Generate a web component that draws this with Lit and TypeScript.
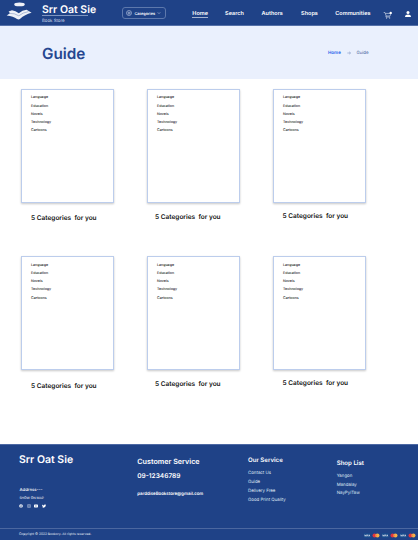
import { LitElement, html, css, svg } from "lit";
import { customElement } from "lit/decorators.js";

const NAV = ["Home", "Search", "Authors", "Shops", "Communities"];
const TOPICS = ["Language", "Education", "Novels", "Technology", "Cartoons"];
const SERVICES = ["Contact Us", "Guide", "Delivery Free", "Good Print Quality"];
const CITIES = ["Yangon", "Mandalay", "NayPyiTaw"];

const logo = html`<svg class="logo" viewBox="0 0 28 21" width="28" height="21">
  <ellipse cx="13.5" cy="4.4" rx="5.3" ry="1.9" fill="#eef1f7" />
  <path d="M2.6 11.6 6 10.2Q9.6 10.6 12.8 13.2 16.4 10.2 20.6 9.8L25.6 12.8Q18.6 14.6 14.2 18.8 12.8 20 11 19 7.4 16.2.7 15.6L4 13.2z" fill="#eef1f7" />
  <path d="M3.6 13.4Q8.6 13 12.8 15.8 17 12.4 22.4 11.6" fill="none" stroke="#8397c0" stroke-width=".6" />
</svg>`;

const cart = html`<svg class="cart" viewBox="0 0 10 8" width="10" height="8">
  <path d="M.7 1.5H2L3.2 5H7L8 2.4H2.4M3.2 5 2.8 6H7.2" fill="none" stroke="#dfe6f3" stroke-width=".6" />
  <circle cx="3.6" cy="7" r=".5" fill="#fff" /><circle cx="6.7" cy="7" r=".5" fill="#fff" />
  <circle cx="7.7" cy="1.9" r="1.2" fill="#fff" />
</svg>`;

const person = html`<svg class="person" viewBox="0 0 6 6" width="6" height="6">
  <circle cx="3" cy="1.5" r="1.5" fill="#fff" />
  <path d="M.1 5.9V5Q.3 3.6 3 3.5 5.7 3.6 5.9 5V5.9z" fill="#fff" />
</svg>`;

const socials = [
  svg`<circle cx="2" cy="2" r="1.8" fill="#fff"/><path d="M2 3.9V1.5Q2 1 2.7 1M1.3 2.2H2.6" fill="none" stroke="#1f4287" stroke-width=".5"/>`,
  svg`<rect x=".4" y=".4" width="3.2" height="3.2" rx=".9" fill="none" stroke="#d5deee" stroke-width=".5"/><circle cx="2" cy="2" r=".8" fill="none" stroke="#d5deee" stroke-width=".4"/>`,
  svg`<rect x="0" y=".5" width="4" height="3" rx=".7" fill="#fff"/><path d="M1.6 1.3 2.8 2 1.6 2.7z" fill="#1f4287"/>`,
  svg`<path d="M.2.6Q1 1.5 2 1.5 1.9.4 2.9.4 3.3.4 3.6.7L4.2.5 3.8 1.3Q3.7 3.6 1.4 3.7.6 3.7 0 3.3.7 3.3 1.1 3 .5 2.8.4 2.3 0 1.8.2.6z" fill="#fff"/>`,
];

const visa = html`<svg viewBox="0 0 8 5" width="8" height="5">
  <rect x=".8" width="6.8" height="5" rx=".6" fill="#184a8c" />
  <path d="M1.6 1.7 2.2 3.3 3 1.7M3.5 3.4 3.8 1.7M5.2 1.8Q4.2 1.7 4.4 2.3 5.1 2.8 4.2 3.2M5.5 3.4 6.3 1.8 6.7 3.4" fill="none" stroke="#fff" stroke-width=".6" />
</svg>`;

const master = html`<svg viewBox="0 0 8 5" width="8" height="5">
  <circle cx="2.6" cy="2.5" r="2.1" fill="#e0343f" />
  <circle cx="5.4" cy="2.5" r="2.1" fill="#f4b04a" />
  <path d="M4 .95A2.1 2.1 0 0 1 4 4.05 2.1 2.1 0 0 1 4 .95z" fill="#ee7447" />
</svg>`;

@customElement("app-root")
export class AppRoot extends LitElement {
  static styles = css`
    :host {
      display: flex;
      flex-direction: column;
      width: 418px;
      height: 540px;
      overflow: hidden;
      background: #fff;
      color: #111;
      font-family: Inter, "Liberation Sans", sans-serif;
      text-rendering: geometricPrecision;
    }
    * { box-sizing: border-box; }
    svg { display: block; flex: none; }
    .top {
      height: 26px;
      flex: none;
      display: flex;
      background: #1f4287;
      border-bottom: 1px solid #5470a8;
      color: #fff;
    }
    .logo { margin-left: 6px; }
    .brand { width: 88px; padding: 4px 0 0 8px; }
    .name { font-size: 10.5px; line-height: 12px; font-weight: 600; white-space: nowrap; }
    .rule { width: 46px; height: 1px; margin-top: -1px; background: #7f95c0; }
    .sub { font-size: 4.35px; line-height: 5px; padding-top: 3.3px; color: #d3dcec; }
    .picker {
      width: 44px;
      height: 12px;
      margin-top: 7px;
      border: 1px solid #5d78ac;
      border-radius: 3px;
      display: flex;
      align-items: center;
      padding-left: 2.5px;
      font-size: 3.9px;
      font-weight: 600;
    }
    .picker span { width: 25px; padding-left: 3px; }
    .nav {
      margin-left: 26.3px;
      display: grid;
      grid-template-columns: 32.8px 36.5px 39.5px 34.2px 48px;
      font-size: 5.5px;
      line-height: 7px;
      font-weight: 600;
      padding-top: 10px;
    }
    .nav a { justify-self: start; height: 8px; padding-top: 1px; }
    .nav .on { border-bottom: 1px solid #a5b4d1; }
    .cart { margin-top: 10.5px; }
    .person { margin: 11px 0 0 12px; }
    .hero {
      height: 53px;
      flex: none;
      display: flex;
      align-items: center;
      padding: 1px 0 0 42px;
      background: #eaf0fd;
    }
    .hero h1 { margin: 0; width: 286px; font-size: 15.3px; line-height: 18px; padding-top: 1px; font-weight: 600; color: #254690; }
    .crumbs { display: grid; grid-template-columns: 18.8px 9.7px 14px; align-items: center; font-size: 4.35px; line-height: 7px; padding-top: .6px; color: #4864a0; }
    .crumbs b { font-size: 4.5px; font-weight: 600; color: #2563eb; }
    .shelf { display: grid; grid-template-columns: repeat(3, 126px); grid-auto-rows: 167.3px; padding: 10px 0 0 21px; flex: 1; align-content: start; }
    .card {
      width: 93px;
      height: 114px;
      border: 1px solid #bccdec;
      box-shadow: 0 1px 2px rgba(0, 0, 0, 0.22);
      padding: 3.3px 0 0 9px;
      font-size: 3.6px;
      line-height: 8.25px;
      font-weight: 500;
      color: #222;
    }
    .title { font-size: 6.5px; line-height: 8px; font-weight: 600; white-space: pre; }
    .t0 { padding: 11.4px 0 0 10px; }
    .t1 { padding: 9.5px 0 0 8px; }
    .t2 { padding: 8.8px 0 0 9.5px; }
    .foot { flex: none; height: 96.5px; background: #1f4287; color: #fff; display: flex; flex-direction: column; border-top: 1px solid #4d69a4; }
    .cols { height: 84px; display: grid; grid-template-columns: 118.3px 110.7px 88.7px 60px; padding-left: 19px; border-bottom: 1px solid #4b67a0; flex: none; }
    .cols h2, .cols h3 { margin: 0; font-weight: 600; white-space: nowrap; }
    .cols h2 { font-size: 10.5px; line-height: 12px; padding-top: 9.4px; }
    .addr { font-size: 4.3px; line-height: 6px; font-weight: 500; padding: 21.8px 0 0 .5px; }
    .map { font-size: 3.27px; line-height: 4px; padding: 2.6px 0 0 .5px; }
    .social { display: flex; gap: 3.7px; padding-top: 3.4px; }
    .help h3 { font-size: 7.2px; line-height: 8px; padding-top: 13px; }
    .phone { font-size: 6.55px; line-height: 8px; font-weight: 600; padding-top: 6px; }
    .mail { font-size: 4.35px; line-height: 6px; font-weight: 600; padding-top: 12px; }
    .list { font-size: 4.4px; line-height: 8.75px; color: #dde5f2; }
    .list h3 { font-size: 6.1px; line-height: 8px; color: #fff; padding: 12.8px 0 5.2px; }
    .shops h3 { padding: 15.2px 0 5.2px; }
    .base { flex: 1; display: flex; align-items: center; justify-content: space-between; padding: 0 2px 0 19px; }
    .copy { font-size: 3.25px; line-height: 5px; color: #e4eaf5; }
    .pay { display: flex; gap: 1px; padding-top: 2px; }
  `;

  render() {
    return html`
      <header class="top">
        ${logo}
        <div class="brand">
          <div class="name">Srr Oat Sie</div>
          <div class="rule"></div>
          <div class="sub">Book Store</div>
        </div>
        <div class="picker">
          <svg viewBox="0 0 6 6" width="6" height="6" fill="none" stroke="#c3cfe5" stroke-width=".6">
            <circle cx="3" cy="3" r="2.5" /><path d="M2 2h.8v.8H2zM3.4 2h.8v.8h-.8zM2 3.4h.8v.8H2zM3.4 3.4h.8v.8h-.8z" stroke-width=".4" />
          </svg>
          <span>Categories</span>
          <svg viewBox="0 0 4 4" width="4" height="4"><path d="M.8 1.4 2 2.6 3.2 1.4" fill="none" stroke="#c3cfe5" stroke-width=".6" /></svg>
        </div>
        <nav class="nav">${NAV.map((n, i) => html`<a class=${i ? "" : "on"}>${n}</a>`)}</nav>
        ${cart}${person}
      </header>
      <section class="hero">
        <h1>Guide</h1>
        <div class="crumbs">
          <b>Home</b>
          <svg viewBox="0 0 4 4" width="4" height="4"><path d="M.3 2H3.5M2.2.8 3.5 2 2.2 3.2" fill="none" stroke="#6d86b8" stroke-width=".5" /></svg>
          <span>Guide</span>
        </div>
      </section>
      <main class="shelf">
        ${[0, 1, 2, 3, 4, 5].map(
          (i) => html`<article>
            <div class="card">${TOPICS.map((t) => html`<div>${t}</div>`)}</div>
            <div class="title t${i % 3}">${"5 Categories  for you"}</div>
          </article>`
        )}
      </main>
      <footer class="foot">
        <div class="cols">
          <div>
            <h2>Srr Oat Sie</h2>
            <div class="addr">Address---</div>
            <div class="map">SHOW ON MAP</div>
            <div class="social">${socials.map((s) => html`<svg viewBox="0 0 4 4" width="4" height="4">${s}</svg>`)}</div>
          </div>
          <div class="help">
            <h3>Customer Service</h3>
            <div class="phone">09-12346789</div>
            <div class="mail">parddiseBookstore@gmail.com</div>
          </div>
          <div class="list"><h3>Our Service</h3>${SERVICES.map((s) => html`<div>${s}</div>`)}</div>
          <div class="list shops"><h3>Shop List</h3>${CITIES.map((s) => html`<div>${s}</div>`)}</div>
        </div>
        <div class="base">
          <div class="copy">Copyright © 2022 Bookory. All rights reserved.</div>
          <div class="pay">${[0, 1, 2].map(() => html`${visa}${master}`)}</div>
        </div>
      </footer>
    `;
  }
}
